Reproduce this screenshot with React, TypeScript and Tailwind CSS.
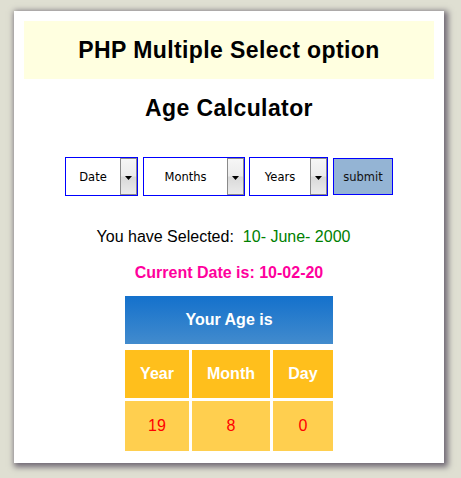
import React from "react";

const Arrow = () => (
  <svg width="7" height="4" viewBox="0 0 7 4" className="block">
    <path d="M0 0 L7 0 L3.5 4 Z" fill="#000" />
  </svg>
);

function FakeSelect({ label, width }: { label: string; width: string }) {
  return (
    <div className={`${width} h-[39px] border border-[#0000ff] bg-white flex`}>
      <div className="flex-1 flex items-center justify-center pt-[3px] text-[11.5px] text-black">{label}</div>
      <div className="w-[17px] h-full border border-[#8a8a8a] bg-[linear-gradient(to_bottom,#f6f6f6_0%,#ececec_48%,#d9d9d9_52%,#ebebeb_100%)] flex items-center justify-center pt-[3px]">
        <Arrow />
      </div>
    </div>
  );
}

export default function App() {
  return (
    <div className="min-h-[478px] w-[461px] bg-[#dfdfd2] pt-[11px] pl-[14px] font-['Liberation_Sans',Arial,sans-serif]">
      <div className="w-[430px] h-[452px] bg-white shadow-[2px_2px_6px_2px_#6f6874] px-[10px] pt-[10px]">
        <div className="h-[58px] bg-[#ffffe0] flex items-center justify-center text-[23px] tracking-[0.4px] font-bold text-black">
          PHP Multiple Select option
        </div>
        <div className="mt-[16px] text-center text-[23px] tracking-[0.4px] leading-[26px] font-bold text-black">Age Calculator</div>
        <div className="mt-[36px] flex justify-center items-center font-['DejaVu_Sans',sans-serif]">
          <FakeSelect label="Date" width="w-[73px]" />
          <div className="ml-[5px]">
            <FakeSelect label="Months" width="w-[102px]" />
          </div>
          <div className="ml-[4px]">
            <FakeSelect label="Years" width="w-[79px]" />
          </div>
          <div className="ml-[5px] w-[60px] h-[37px] border border-[#0000ff] bg-[#94b4d4] flex items-center justify-center pt-[2px] text-[11.5px] text-[#111]">
            submit
          </div>
        </div>
        <div className="mt-[32px] flex justify-center pr-[11px] text-[16px] leading-[18px]">
          <span className="text-black">You have Selected:</span>
          <span className="ml-[9px] text-[#008000]">10- June- 2000</span>
        </div>
        <div className="mt-[18px] text-center text-[16px] leading-[18px] font-bold text-[#ff009d]">
          Current Date is: 10-02-20
        </div>
        <div className="mt-[14px] mx-auto w-[208px] flex flex-col">
          <div className="h-[48px] bg-[linear-gradient(to_bottom,#1471cc,#428bcd)] flex items-center justify-center text-white font-bold text-[16px]">
            Your Age is
          </div>
          <div className="mt-[6px] flex gap-[3px] h-[48px] text-white font-bold text-[16px]">
            <div className="w-[64px] bg-[#ffbf1c] flex items-center justify-center">Year</div>
            <div className="w-[78px] bg-[#ffbf1c] flex items-center justify-center">Month</div>
            <div className="w-[60px] bg-[#ffbf1c] flex items-center justify-center">Day</div>
          </div>
          <div className="mt-[3px] flex gap-[3px] h-[50px] text-[#ff0000] text-[16px]">
            <div className="w-[64px] bg-[#ffcf4f] flex items-center justify-center">19</div>
            <div className="w-[78px] bg-[#ffcf4f] flex items-center justify-center">8</div>
            <div className="w-[60px] bg-[#ffcf4f] flex items-center justify-center">0</div>
          </div>
        </div>
      </div>
    </div>
  );
}
